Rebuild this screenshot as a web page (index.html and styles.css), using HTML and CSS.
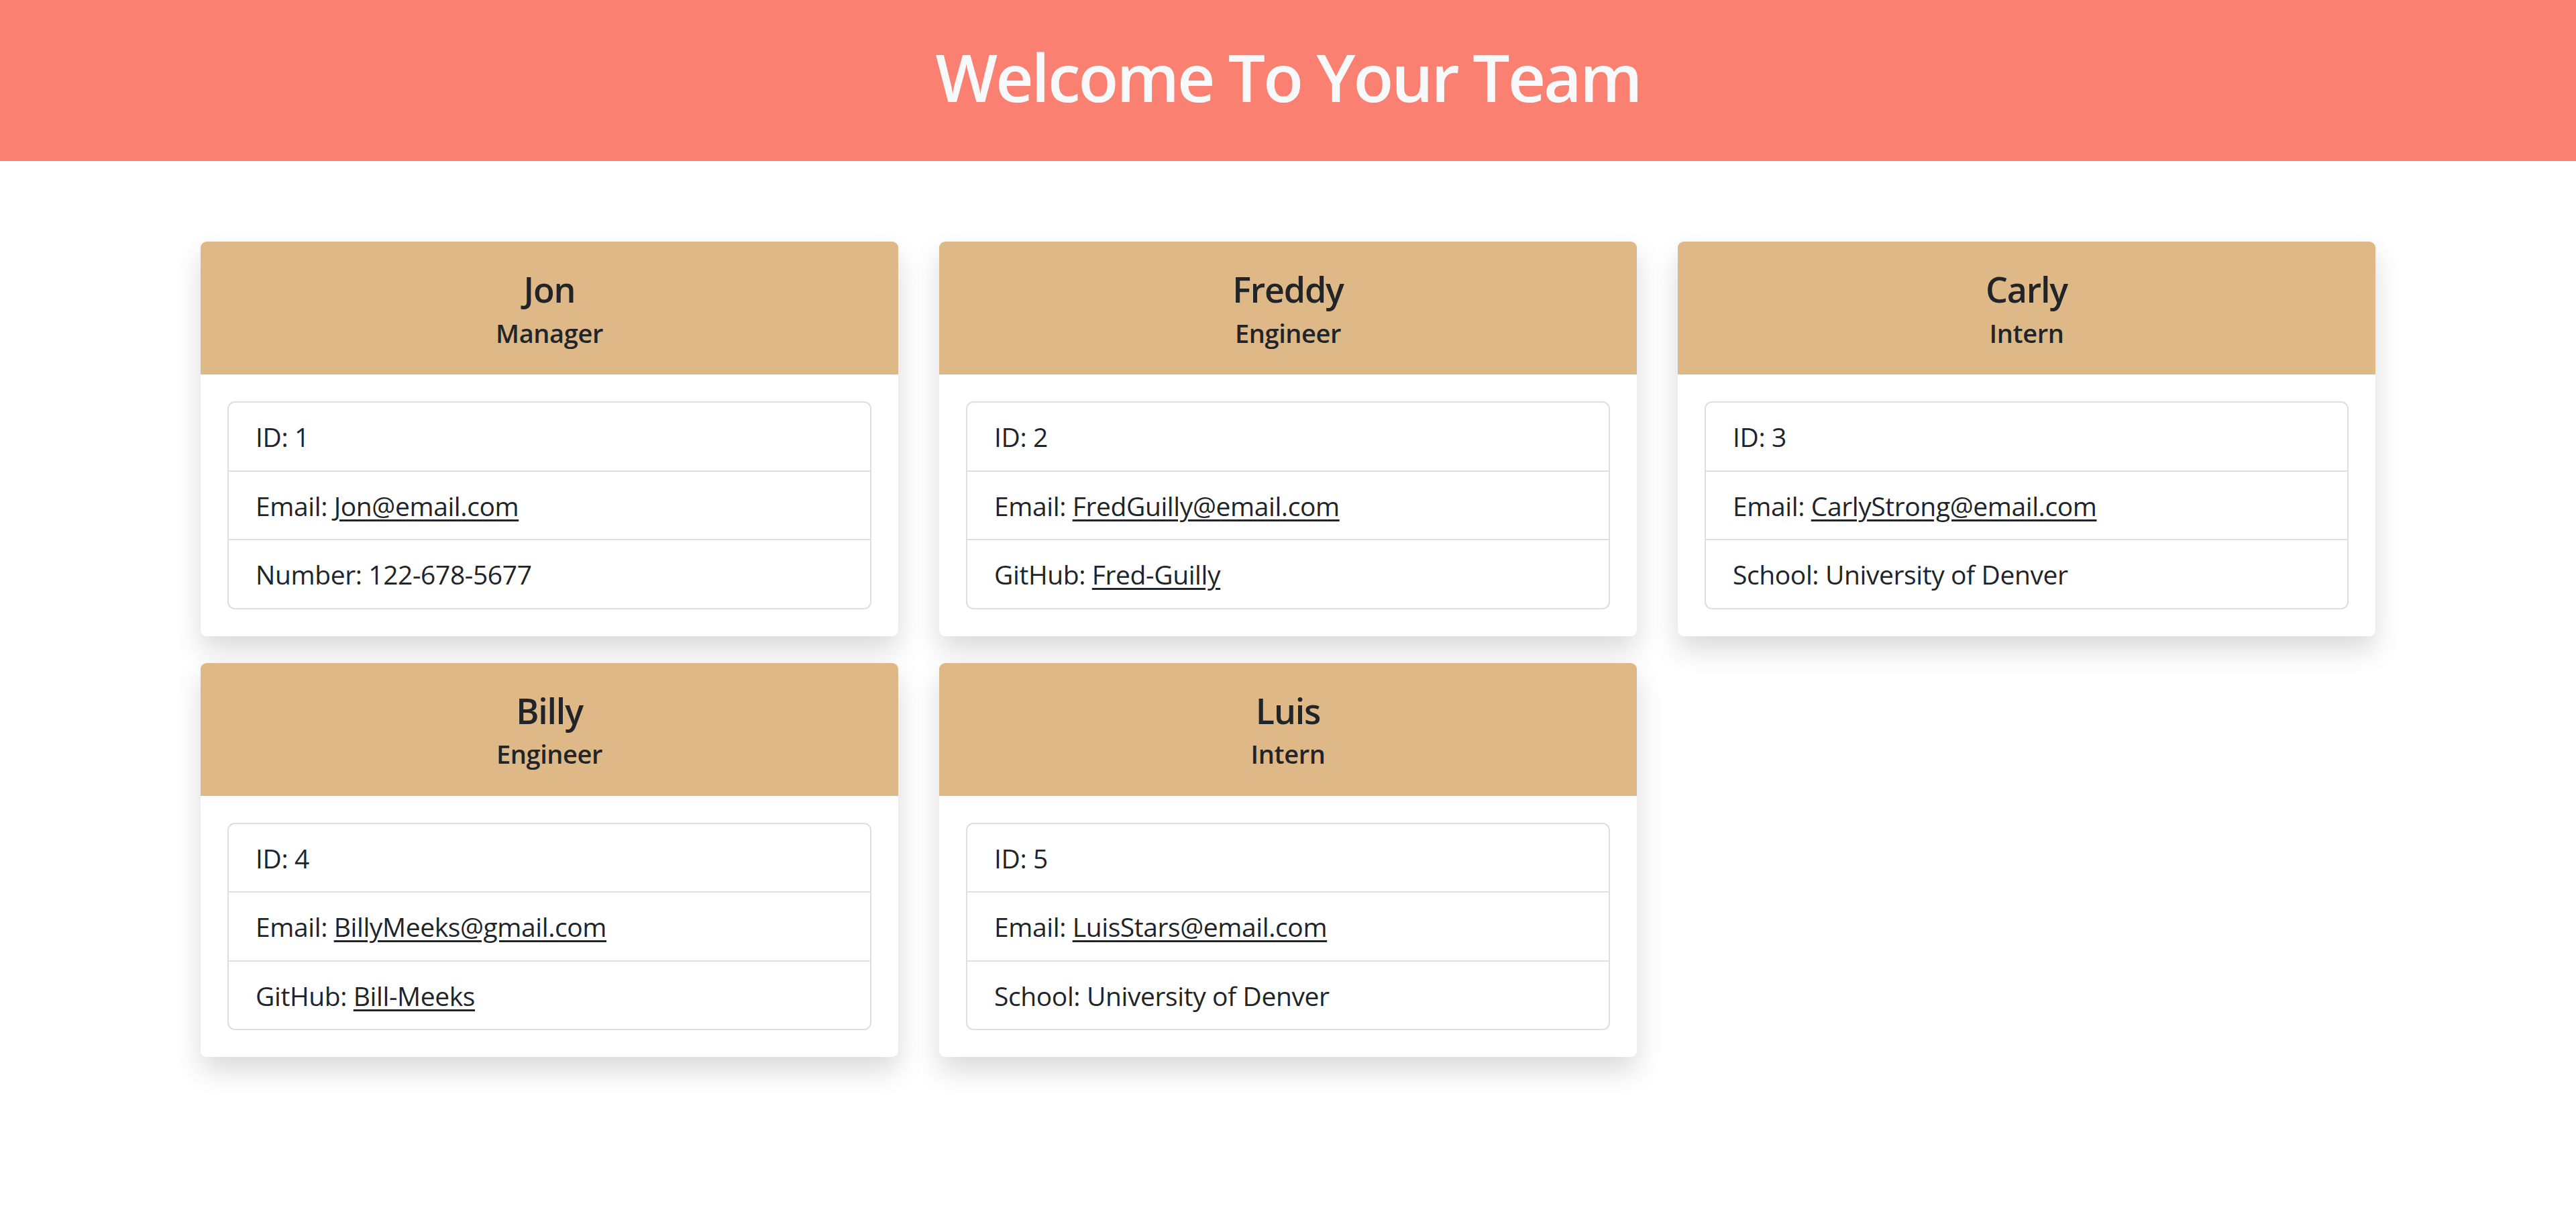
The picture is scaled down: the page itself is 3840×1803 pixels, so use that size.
FILE: index.html
```html
<!DOCTYPE html>
<html lang="en">
<head>
<meta charset="utf-8">
<title>My Team</title>
<link rel="stylesheet" href="styles.css">
</head>
<body>
<header class="banner">
  <h1 class="banner-title">Welcome To Your Team</h1>
</header>
<main class="team">
  <div class="team-grid">
    <div class="card">
      <div class="card-header">
        <h2 class="card-name">Jon</h2>
        <h3 class="card-role">Manager</h3>
      </div>
      <div class="card-body">
        <ul class="info-list">
          <li class="info-item">ID: 1</li>
          <li class="info-item">Email: <a class="info-link" href="mailto:Jon@email.com">Jon@email.com</a></li>
          <li class="info-item">Number: 122-678-5677</li>
        </ul>
      </div>
    </div>
    <div class="card">
      <div class="card-header">
        <h2 class="card-name">Freddy</h2>
        <h3 class="card-role">Engineer</h3>
      </div>
      <div class="card-body">
        <ul class="info-list">
          <li class="info-item">ID: 2</li>
          <li class="info-item">Email: <a class="info-link" href="mailto:FredGuilly@email.com">FredGuilly@email.com</a></li>
          <li class="info-item">GitHub: <a class="info-link" href="#">Fred-Guilly</a></li>
        </ul>
      </div>
    </div>
    <div class="card">
      <div class="card-header">
        <h2 class="card-name">Carly</h2>
        <h3 class="card-role">Intern</h3>
      </div>
      <div class="card-body">
        <ul class="info-list">
          <li class="info-item">ID: 3</li>
          <li class="info-item">Email: <a class="info-link" href="mailto:CarlyStrong@email.com">CarlyStrong@email.com</a></li>
          <li class="info-item">School: University of Denver</li>
        </ul>
      </div>
    </div>
    <div class="card">
      <div class="card-header">
        <h2 class="card-name">Billy</h2>
        <h3 class="card-role">Engineer</h3>
      </div>
      <div class="card-body">
        <ul class="info-list">
          <li class="info-item">ID: 4</li>
          <li class="info-item">Email: <a class="info-link" href="mailto:BillyMeeks@gmail.com">BillyMeeks@gmail.com</a></li>
          <li class="info-item">GitHub: <a class="info-link" href="#">Bill-Meeks</a></li>
        </ul>
      </div>
    </div>
    <div class="card">
      <div class="card-header">
        <h2 class="card-name">Luis</h2>
        <h3 class="card-role">Intern</h3>
      </div>
      <div class="card-body">
        <ul class="info-list">
          <li class="info-item">ID: 5</li>
          <li class="info-item">Email: <a class="info-link" href="mailto:LuisStars@email.com">LuisStars@email.com</a></li>
          <li class="info-item">School: University of Denver</li>
        </ul>
      </div>
    </div>
  </div>
</main>
</body>
</html>
```
FILE: styles.css
```css
* { box-sizing: border-box; }

html, body {
  margin: 0;
  padding: 0;
  background: #ffffff;
}

body {
  font-family: "Open Sans", "Noto Sans", "DejaVu Sans", sans-serif;
  color: #212529;
}

.banner {
  background: #fa8072;
  height: 240px;
  padding-top: 55px;
  text-align: center;
}

.banner-title {
  margin: 0;
  font-size: 98px;
  line-height: 118px;
  font-weight: 600;
  letter-spacing: -3px;
  color: #f8f9fa;
}

.team {
  padding: 120px 0 80px;
}

.team-grid {
  display: grid;
  grid-template-columns: repeat(3, 1040px);
  column-gap: 61px;
  row-gap: 40px;
  justify-content: center;
}

.card {
  background: #ffffff;
  border-radius: 9px;
  box-shadow: 0 20px 40px rgba(0, 0, 0, 0.15);
  overflow: hidden;
}

.card-header {
  background: #deb887;
  padding: 40px 40px 39.5px;
  text-align: center;
}

.card-name {
  margin: 0 0 10.5px;
  font-size: 52px;
  line-height: 62px;
  font-weight: 600;
  letter-spacing: -1.2px;
}

.card-role {
  margin: 0;
  font-size: 38px;
  line-height: 46px;
  font-weight: 600;
  letter-spacing: -0.4px;
}

.card-body {
  padding: 40px;
}

.info-list {
  list-style: none;
  margin: 0;
  padding: 0;
  border: 2px solid #dfdfdf;
  border-radius: 11px;
}

.info-item {
  padding: 21px 40px 19.5px;
  font-size: 39px;
  line-height: 60px;
  letter-spacing: -0.4px;
}

.info-item + .info-item {
  border-top: 2px solid #dfdfdf;
}

.info-link {
  color: #212529;
  text-decoration: underline;
  text-decoration-thickness: 2.5px;
  text-underline-offset: 5px;
}
```
